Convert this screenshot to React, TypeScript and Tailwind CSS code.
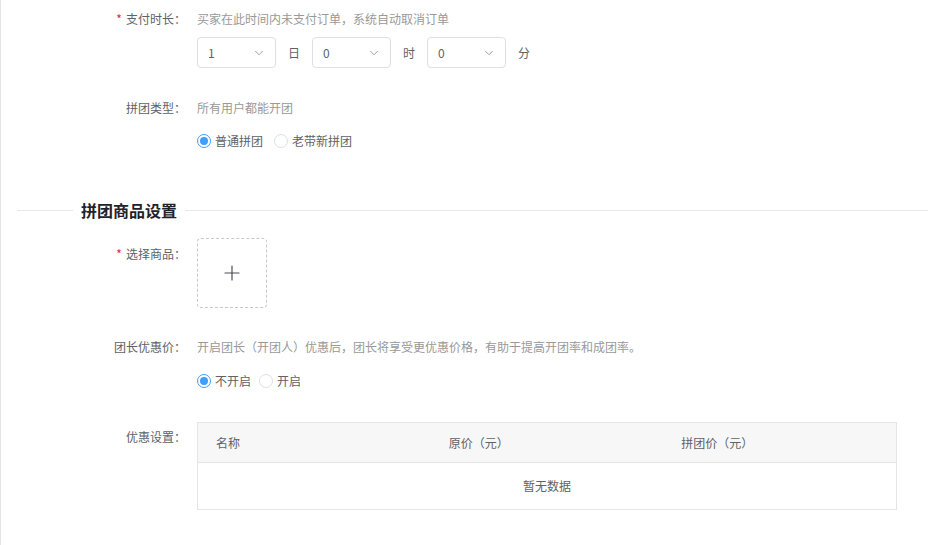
import { ChevronDown, Plus } from "lucide-react";

const font = { fontFamily: '"Noto Sans CJK SC", "Noto Sans", sans-serif' };

function Label({ text, required }: { text: string; required?: boolean }) {
  return (
    <div className="w-[185px] shrink-0 text-right text-xs leading-5 text-[#606266]">
      {required && <span className="mr-1 text-[#f5222d]">*</span>}
      {text}：
    </div>
  );
}

function Select({ value }: { value: string }) {
  return (
    <div className="flex h-[31px] w-[79px] items-center justify-between rounded border border-[#dcdfe6] bg-white pl-[10px] pr-[9px] text-xs text-[#606266]">
      <span>{value}</span>
      <ChevronDown className="h-[14px] w-[14px] text-[#909399]" strokeWidth={1.5} />
    </div>
  );
}

function Radio({ label, checked }: { label: string; checked?: boolean }) {
  return (
    <label className="flex items-center gap-1 text-xs text-[#606266]">
      <span
        className={
          checked
            ? "flex h-[14px] w-[14px] items-center justify-center rounded-full border border-[#409eff] bg-white"
            : "h-[14px] w-[14px] rounded-full border border-[#dcdfe6] bg-white"
        }
      >
        {checked && <span className="h-2 w-2 rounded-full bg-[#409eff]" />}
      </span>
      {label}
    </label>
  );
}

export default function App() {
  return (
    <div style={font} className="h-[545px] w-[928px] overflow-hidden border-l border-[#e4e4e4] bg-white pt-[9px]">
      {/* 支付时长 */}
      <div className="flex gap-[11px]">
        <Label text="支付时长" required />
        <div className="flex flex-col">
          <div className="text-xs leading-5 text-[#999]">买家在此时间内未支付订单，系统自动取消订单</div>
          <div className="mt-2 flex items-center text-xs text-[#606266]">
            <Select value="1" />
            <span className="mx-3">日</span>
            <Select value="0" />
            <span className="mx-3">时</span>
            <Select value="0" />
            <span className="ml-3">分</span>
          </div>
        </div>
      </div>

      {/* 拼团类型 */}
      <div className="mt-[30px] flex gap-[11px]">
        <Label text="拼团类型" />
        <div className="flex flex-col">
          <div className="text-xs leading-5 text-[#999]">所有用户都能开团</div>
          <div className="mt-[13px] flex h-5 items-center gap-[11px]">
            <Radio label="普通拼团" checked />
            <Radio label="老带新拼团" />
          </div>
        </div>
      </div>

      {/* 拼团商品设置 */}
      <div className="mt-[48px] flex items-center">
        <div className="ml-4 h-px w-[56px] bg-[#e8e8e8]" />
        <div className="px-2 text-base font-bold leading-[22px] text-[#1f2329]">拼团商品设置</div>
        <div className="h-px flex-1 bg-[#e8e8e8]" />
      </div>

      {/* 选择商品 */}
      <div className="mt-[17px] flex gap-[11px]">
        <div className="pt-[6px]">
          <Label text="选择商品" required />
        </div>
        <div className="flex h-[70px] w-[70px] items-center justify-center rounded border border-dashed border-[#c8c8c8]">
          <Plus className="h-6 w-6 text-[#4a4f57]" strokeWidth={1.2} />
        </div>
      </div>

      {/* 团长优惠价 */}
      <div className="mt-[29px] flex gap-[11px]">
        <Label text="团长优惠价" />
        <div className="flex flex-col">
          <div className="text-xs leading-5 text-[#999]">
            开启团长（开团人）优惠后，团长将享受更优惠价格，有助于提高开团率和成团率。
          </div>
          <div className="mt-[14px] flex h-5 items-center gap-2">
            <Radio label="不开启" checked />
            <Radio label="开启" />
          </div>
        </div>
      </div>

      {/* 优惠设置 */}
      <div className="mt-[31px] flex gap-[11px]">
        <div className="pt-[5px]">
          <Label text="优惠设置" />
        </div>
        <div className="w-[700px] border border-[#e5e5e5] text-xs text-[#606266]">
          <div className="grid h-[40px] grid-cols-3 items-center border-b border-[#e5e5e5] bg-[#f7f7f7]">
            <div className="pl-[18px]">名称</div>
            <div className="pl-[18px]">原价（元）</div>
            <div className="pl-[18px]">拼团价（元）</div>
          </div>
          <div className="flex h-[46px] items-center justify-center">暂无数据</div>
        </div>
      </div>
    </div>
  );
}
